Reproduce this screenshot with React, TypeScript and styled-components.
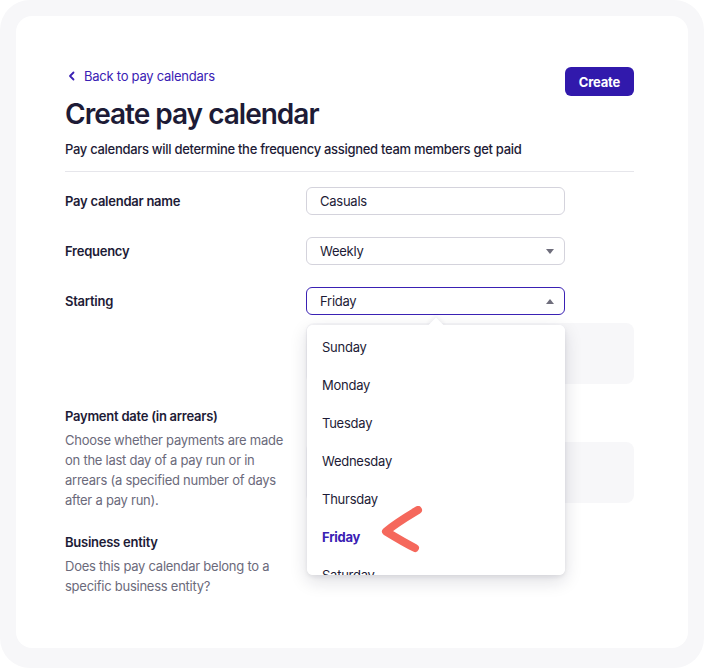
import styled, { createGlobalStyle } from "styled-components";

const colors = {
   ink: "#1d1b36",
   muted: "#6b6a7b",
   indigo: "#3a21b4",
   button: "#3119ac",
   border: "#d4d3dc",
   frame: "#f7f7f9",
   panel: "#f7f7f9",
   divider: "#e6e6eb",
   marker: "#f5685c",
};

const GlobalStyle = createGlobalStyle`
   html, body {
      margin: 0;
      padding: 0;
      background: #ffffff;
   }
   body {
      font-family: Inter, "Noto Sans", "Liberation Sans", sans-serif;
      color: ${colors.ink};
      letter-spacing: -0.25px;
      -webkit-font-smoothing: antialiased;
   }
   * {
      box-sizing: border-box;
   }
`;

const days = ["Sunday", "Monday", "Tuesday", "Wednesday", "Thursday", "Friday", "Saturday"];

export default function App() {
   return (
      <>
         <GlobalStyle />
         <Frame>
            <Card>
               <Header>
                  <TitleBlock>
                     <BackLink>
                        <svg width="8" height="10" viewBox="0 0 8 10" fill="none">
                           <path d="M5.5 1.5L2 5l3.5 3.5" stroke="currentColor" strokeWidth="1.8" strokeLinecap="round" strokeLinejoin="round" />
                        </svg>
                        Back to pay calendars
                     </BackLink>
                     <Title>Create pay calendar</Title>
                     <Subtitle>Pay calendars will determine the frequency assigned team members get paid</Subtitle>
                  </TitleBlock>
                  <PrimaryButton>Create</PrimaryButton>
               </Header>
               <Divider />

               <Form>
                  <Row>
                     <LabelBlock $centered>
                        <Label>Pay calendar name</Label>
                     </LabelBlock>
                     <Field>
                        <Control>Casuals</Control>
                     </Field>
                  </Row>

                  <Row>
                     <LabelBlock $centered>
                        <Label>Frequency</Label>
                     </LabelBlock>
                     <Field>
                        <Control>
                           Weekly
                           <Caret $up={false} />
                        </Control>
                     </Field>
                  </Row>

                  <Row>
                     <LabelBlock $centered>
                        <Label>Starting</Label>
                     </LabelBlock>
                     <Field>
                        <SelectWrap>
                           <Control $active>
                              Friday
                              <Caret $up />
                           </Control>
                           <Menu>
                              <Notch />
                              <MenuList>
                                 {days.map((day) => (
                                    <MenuItem key={day} $selected={day === "Friday"}>
                                       {day}
                                    </MenuItem>
                                 ))}
                              </MenuList>
                              <Marker width="44" height="48" viewBox="0 0 44 48" fill="none">
                                 <path
                                    d="M38 4C28 10 16 17 6 25.5C15 31 25 37 35 42"
                                    stroke={colors.marker}
                                    strokeWidth="8"
                                    strokeLinecap="round"
                                    strokeLinejoin="round"
                                 />
                              </Marker>
                           </Menu>
                        </SelectWrap>
                        <Panel />
                     </Field>
                  </Row>

                  <Row>
                     <LabelBlock>
                        <Label>Payment date (in arrears)</Label>
                        <Description>
                           Choose whether payments are made on the last day of a pay run or in arrears (a specified
                           number of days after a pay run).
                        </Description>
                     </LabelBlock>
                     <Field $offset={36}>
                        <Panel />
                     </Field>
                  </Row>

                  <Row>
                     <LabelBlock>
                        <Label>Business entity</Label>
                        <Description>Does this pay calendar belong to a specific business entity?</Description>
                     </LabelBlock>
                     <Field />
                  </Row>
               </Form>
            </Card>
         </Frame>
      </>
   );
}

const Frame = styled.div`
   width: 704px;
   height: 668px;
   background: ${colors.frame};
   border-radius: 30px;
   padding: 16px 16px 20px 16px;
   overflow: hidden;
`;

const Card = styled.div`
   height: 100%;
   background: #ffffff;
   border-radius: 16px;
   padding: 50px 54px 0 49px;
   overflow: hidden;
`;

const Header = styled.div`
   display: flex;
   justify-content: space-between;
   align-items: flex-start;
`;

const TitleBlock = styled.div`
   display: flex;
   flex-direction: column;
`;

const BackLink = styled.a`
   display: flex;
   align-items: center;
   gap: 8px;
   height: 20px;
   padding-left: 3px;
   font-size: 13px;
   line-height: 20px;
   color: ${colors.indigo};
   cursor: pointer;
`;

const Title = styled.h1`
   margin: 11px 0 0;
   font-size: 28px;
   line-height: 34px;
   font-weight: 600;
   letter-spacing: -1px;
   color: ${colors.ink};
`;

const Subtitle = styled.p`
   margin: 8px 0 0;
   font-size: 13px;
   line-height: 20px;
   font-weight: 500;
   letter-spacing: -0.3px;
   color: ${colors.ink};
`;

const PrimaryButton = styled.button`
   margin-top: 1px;
   height: 29px;
   padding: 0 14px;
   border: none;
   border-radius: 6px;
   background: ${colors.button};
   color: #ffffff;
   font-family: inherit;
   font-size: 13px;
   font-weight: 700;
   letter-spacing: -0.2px;
   cursor: pointer;
`;

const Divider = styled.hr`
   margin: 12px 0 0;
   border: none;
   border-top: 1px solid ${colors.divider};
`;

const Form = styled.div`
   display: flex;
   flex-direction: column;
   gap: 22px;
   padding-top: 15px;
`;

const Row = styled.div`
   display: grid;
   grid-template-columns: 241px 1fr;
   align-items: start;
`;

const LabelBlock = styled.div<{ $centered?: boolean }>`
   display: flex;
   flex-direction: column;
   min-height: ${({ $centered }) => ($centered ? "28px" : "0")};
   justify-content: ${({ $centered }) => ($centered ? "center" : "flex-start")};
`;

const Label = styled.div`
   font-size: 13px;
   line-height: 20px;
   font-weight: 600;
   color: ${colors.ink};
`;

const Description = styled.div`
   margin-top: 4px;
   max-width: 226px;
   font-size: 13px;
   line-height: 20px;
   color: ${colors.muted};
`;

const Field = styled.div<{ $offset?: number }>`
   display: flex;
   flex-direction: column;
   gap: 8px;
   padding-top: ${({ $offset }) => $offset ?? 0}px;
`;

const SelectWrap = styled.div`
   position: relative;
   width: 259px;
`;

const Control = styled.div<{ $active?: boolean }>`
   position: relative;
   width: 259px;
   height: 28px;
   display: flex;
   align-items: center;
   padding: 0 13px;
   border: 1px solid ${({ $active }) => ($active ? colors.indigo : colors.border)};
   border-radius: 6px;
   background: #ffffff;
   font-size: 13px;
   color: ${colors.ink};
`;

const Caret = styled.span<{ $up: boolean }>`
   position: absolute;
   right: 10px;
   top: 50%;
   margin-top: -2px;
   width: 0;
   height: 0;
   border-left: 4px solid transparent;
   border-right: 4px solid transparent;
   ${({ $up }) =>
      $up ? "border-bottom: 5px solid #6f6e7c;" : "border-top: 5px solid #6f6e7c;"}
`;

const Panel = styled.div`
   height: 61px;
   border-radius: 8px;
   background: ${colors.panel};
`;

const Menu = styled.div`
   position: absolute;
   top: calc(100% + 10px);
   left: 1px;
   width: 258px;
   height: 250px;
   background: #ffffff;
   border-radius: 6px;
   box-shadow: 0 2px 4px rgba(20, 20, 50, 0.08), 0 6px 18px rgba(20, 20, 50, 0.14);
   z-index: 10;
`;

const Notch = styled.div`
   position: absolute;
   top: -5px;
   left: 50%;
   margin-left: -6px;
   width: 12px;
   height: 12px;
   background: #ffffff;
   transform: rotate(45deg);
   box-shadow: -2px -2px 4px rgba(20, 20, 50, 0.05);
`;

const MenuList = styled.div`
   position: relative;
   height: 100%;
   padding-top: 3px;
   overflow: hidden;
   border-radius: 6px;
   background: #ffffff;
`;

const MenuItem = styled.div<{ $selected: boolean }>`
   height: 38px;
   display: flex;
   align-items: center;
   padding-left: 15px;
   font-size: 13px;
   font-weight: ${({ $selected }) => ($selected ? 700 : 400)};
   color: ${({ $selected }) => ($selected ? colors.indigo : colors.ink)};
`;

const Marker = styled.svg`
   position: absolute;
   left: 73px;
   top: 181px;
`;
